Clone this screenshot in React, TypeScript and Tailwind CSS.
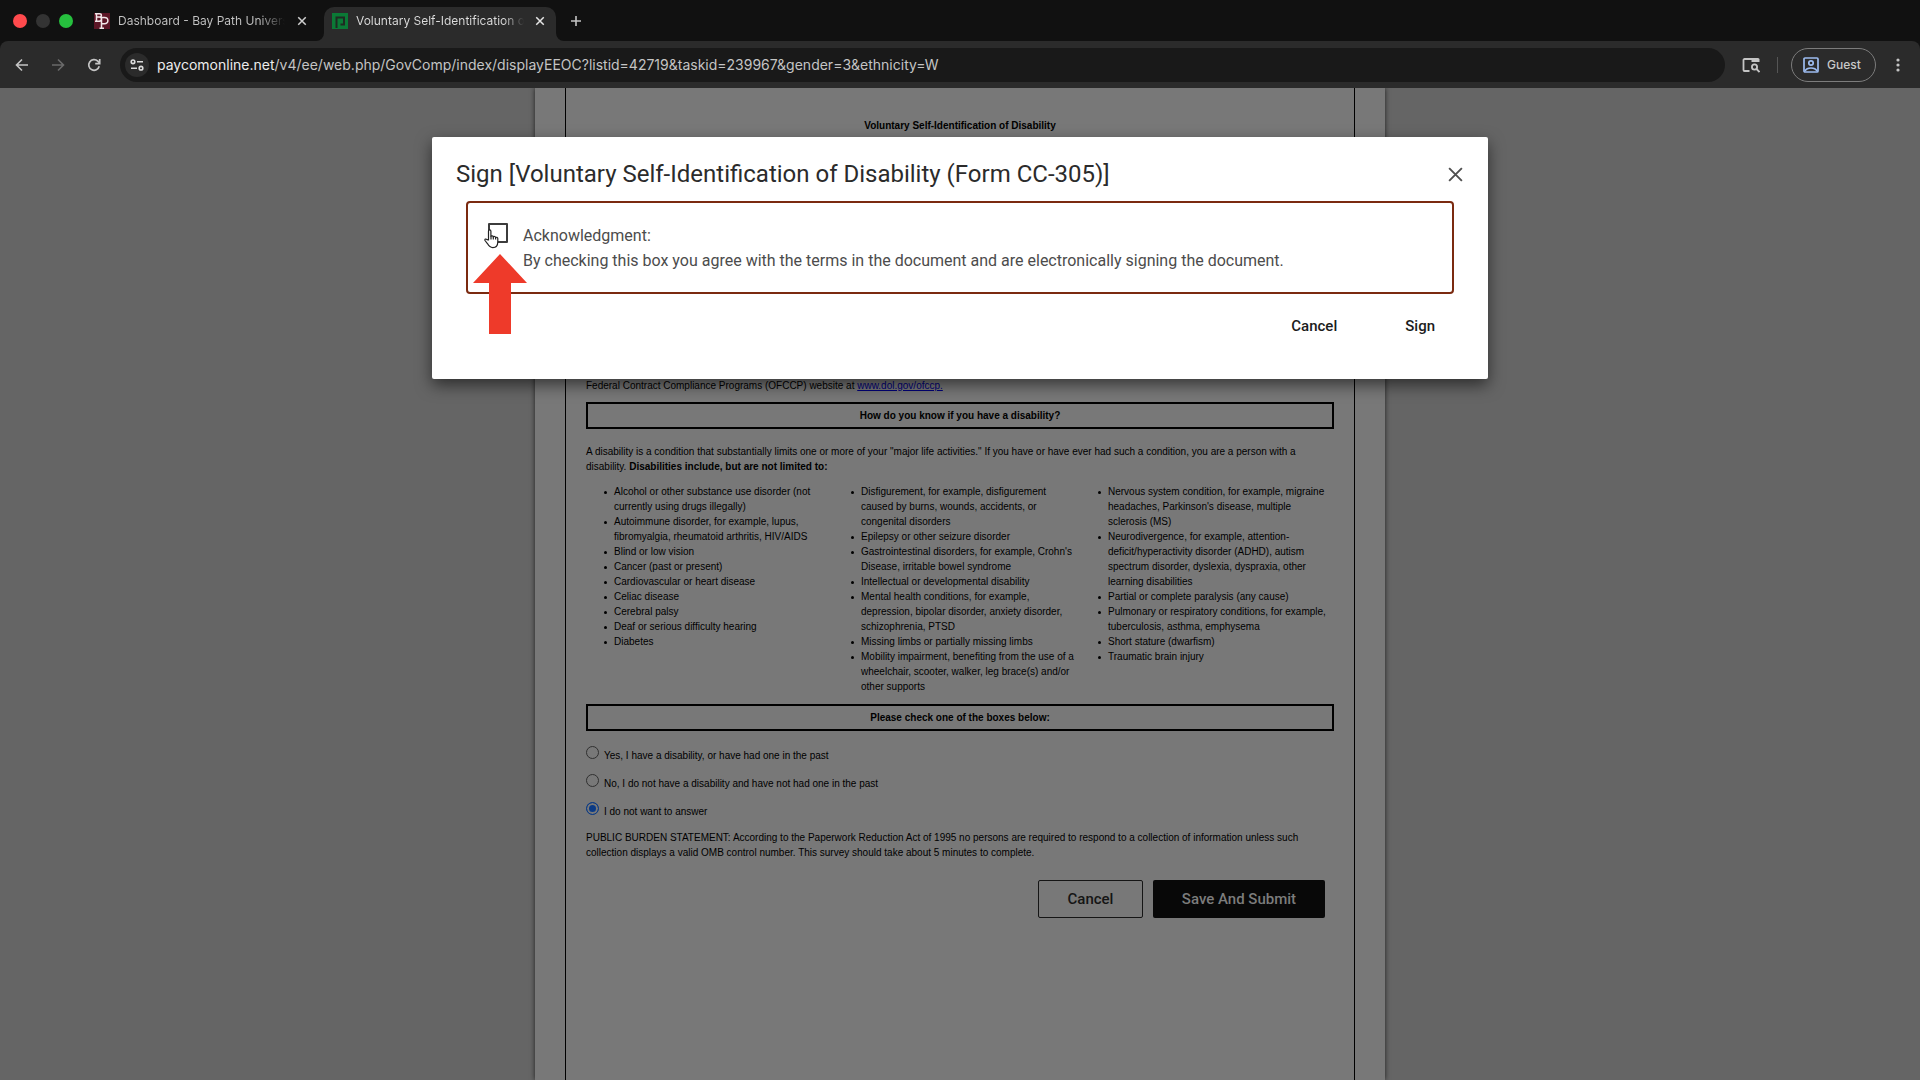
import React from 'react';

const lists: string[][] = [
  [
    'Alcohol or other substance use disorder (not currently using drugs illegally)',
    'Autoimmune disorder, for example, lupus, fibromyalgia, rheumatoid arthritis, HIV/AIDS',
    'Blind or low vision',
    'Cancer (past or present)',
    'Cardiovascular or heart disease',
    'Celiac disease',
    'Cerebral palsy',
    'Deaf or serious difficulty hearing',
    'Diabetes',
  ],
  [
    'Disfigurement, for example, disfigurement caused by burns, wounds, accidents, or congenital disorders',
    'Epilepsy or other seizure disorder',
    "Gastrointestinal disorders, for example, Crohn's Disease, irritable bowel syndrome",
    'Intellectual or developmental disability',
    'Mental health conditions, for example, depression, bipolar disorder, anxiety disorder, schizophrenia, PTSD',
    'Missing limbs or partially missing limbs',
    'Mobility impairment, benefiting from the use of a wheelchair, scooter, walker, leg brace(s) and/or other supports',
  ],
  [
    "Nervous system condition, for example, migraine headaches, Parkinson's disease, multiple sclerosis (MS)",
    'Neurodivergence, for example, attention-deficit/hyperactivity disorder (ADHD), autism spectrum disorder, dyslexia, dyspraxia, other learning disabilities',
    'Partial or complete paralysis (any cause)',
    'Pulmonary or respiratory conditions, for example, tuberculosis, asthma, emphysema',
    'Short stature (dwarfism)',
    'Traumatic brain injury',
  ],
];

const answers = [
  'Yes, I have a disability, or have had one in the past',
  'No, I do not have a disability and have not had one in the past',
  'I do not want to answer',
];

function CloseIcon({ size, width }: { size: number; width: number }) {
  return (
    <svg width={size} height={size} viewBox="0 0 16 16" fill="none" stroke="currentColor" strokeWidth={width}>
      <path d="M2 2l12 12M14 2L2 14" />
    </svg>
  );
}

function TabStrip() {
  return (
    <div className="flex h-[41px] items-end bg-[#111111] pl-[13px]">
      <div className="flex h-[41px] w-[62px] shrink-0 items-center gap-[9px]">
        <span className="size-[14px] shrink-0 rounded-full bg-[#ff4a4d]" />
        <span className="size-[14px] shrink-0 rounded-full bg-[#333333]" />
        <span className="size-[14px] shrink-0 rounded-full bg-[#26c03e]" />
      </div>
      <div className="flex h-[41px] w-[249px] items-center pl-[19px] text-[#c4c4c4]">
        <svg width="16" height="16" viewBox="0 0 16 16" className="shrink-0">
          <rect width="16" height="16" fill="#5c1626" />
          <path
            d="M2.500 0v8.500M1 .8h4.500c2.500 0 2.500 3.200 0 3.200H2.500M5.500 4c3 .4 2.500 4.300-1 4.300H1M7.500 4v11.500M6 4.600h4.500c4.500 0 4.500 6.200 0 6.200H7.500M5.500 15.300h4.500"
            fill="none"
            stroke="#f1e6e8"
            strokeWidth="1.500"
          />
        </svg>
        <span className="ml-2 w-[167px] overflow-hidden bg-linear-to-r from-[#c4c4c4] from-85% to-transparent bg-clip-text text-[12px] leading-[18px] whitespace-nowrap text-transparent">
          Dashboard - Bay Path University
        </span>
        <button aria-label="Close tab" className="ml-[12px] text-[#d0d0d0]">
          <CloseIcon size={10} width={2.4} />
        </button>
      </div>
      <div className="relative flex h-[34px] w-[232px] items-center rounded-t-[10px] bg-[#2b2b2b] pb-[6px] pl-[8px]">
        <svg width="8" height="8" viewBox="0 0 8 8" className="absolute bottom-0 -left-2">
          <path d="M8 0v8H0A8 8 0 0 0 8 0Z" fill="#2b2b2b" />
        </svg>
        <svg width="8" height="8" viewBox="0 0 8 8" className="absolute -right-2 bottom-0">
          <path d="M0 0v8h8A8 8 0 0 1 0 0Z" fill="#2b2b2b" />
        </svg>
        <svg width="16" height="16" viewBox="0 0 16 16" className="shrink-0">
          <rect width="16" height="16" fill="#0b7a36" />
          <path d="M4.500 15V4.500h7.500v7H8.500" fill="none" stroke="#1f2b22" strokeWidth="2" />
        </svg>
        <span className="ml-2 w-[168px] overflow-hidden bg-linear-to-r from-[#dedede] from-88% to-transparent bg-clip-text text-[12px] leading-[18px] whitespace-nowrap text-transparent">
          Voluntary Self-Identification of Disability
        </span>
        <button aria-label="Close tab" className="ml-[11px] text-[#e6e6e6]">
          <CloseIcon size={10} width={2.4} />
        </button>
      </div>
      <button aria-label="New tab" className="ml-[14px] flex h-[41px] items-center text-[#c4c4c4]">
        <svg width="12" height="12" viewBox="0 0 12 12" stroke="currentColor" strokeWidth="1.600">
          <path d="M6 1v10M1 6h10" />
        </svg>
      </button>
    </div>
  );
}

function Toolbar() {
  return (
    <div className="bg-[#111111]">
      <div className="flex h-[47px] items-center rounded-t-lg bg-[#2b2b2b] pl-[15px] text-[#c4c4c4]">
        <button aria-label="Back">
          <svg width="14" height="14" viewBox="0 0 14 14" fill="none" stroke="currentColor" strokeWidth="1.600">
            <path d="M13 7H2M7 1.500L1.500 7 7 12.500" />
          </svg>
        </button>
        <button aria-label="Forward" className="ml-[22px] text-[#6a6a6a]">
          <svg width="14" height="14" viewBox="0 0 14 14" fill="none" stroke="currentColor" strokeWidth="1.600">
            <path d="M1 7h11M7 1.500L12.500 7 7 12.500" />
          </svg>
        </button>
        <button aria-label="Reload" className="ml-[22px]">
          <svg width="14" height="14" viewBox="0 0 14 14" fill="none" stroke="currentColor" strokeWidth="1.700">
            <path d="M12.200 8.200A5.300 5.300 0 1 1 10.800 3.200L12.500 5" />
            <path d="M12.700 1v4.600H8.200" />
          </svg>
        </button>
        <div className="ml-[19px] flex h-[34px] flex-1 items-center rounded-full bg-[#191919] pl-[5px]">
          <button aria-label="Site information" className="flex size-6 items-center justify-center rounded-full bg-[#2b2b2b] text-[#dcdcdc]">
            <svg width="14" height="12" viewBox="0 0 14 12" fill="none" stroke="currentColor" strokeWidth="1.600">
              <circle cx="3" cy="2.800" r="1.800" />
              <path d="M7 2.800h6M1 9.200h6" />
              <circle cx="11" cy="9.200" r="1.800" />
            </svg>
          </button>
          <p className="ml-2 text-[14px] whitespace-nowrap text-[#c4c4c4]">
            <span className="text-[#ececec]">paycomonline.net</span>
            /v4/ee/web.php/GovComp/index/displayEEOC?listid=42719&amp;taskid=239967&amp;gender=3&amp;ethnicity=W
          </p>
        </div>
        <button aria-label="Search tabs" className="ml-[17px]">
          <svg width="18" height="16" viewBox="0 0 18 16" fill="none" stroke="currentColor" strokeWidth="1.800">
            <path d="M7.500 14H2.500a1 1 0 0 1-1-1V3a1 1 0 0 1 1-1H10" />
            <path d="M9.500 1h6.500a1.500 1.500 0 0 1 1.500 1.500V5h-8z" fill="currentColor" stroke="none" />
            <circle cx="12.500" cy="10" r="2.600" />
            <path d="M14.500 12l3 3" />
          </svg>
        </button>
        <span className="ml-[17px] h-4 w-px bg-[#555555]" />
        <button className="ml-[13px] flex h-[34px] w-[85px] items-center gap-2 rounded-full border border-[#7c7c7c] pl-[11px] text-[12px] font-medium text-[#c8c8c8]">
          <svg width="16" height="16" viewBox="0 0 16 16" fill="none" stroke="#9dbcf0" strokeWidth="1.700">
            <rect x="1" y="1" width="14" height="14" rx="1" />
            <circle cx="8" cy="6" r="2.200" />
            <path d="M2 14c2-4 10-4 12 0" />
          </svg>
          Guest
        </button>
        <button aria-label="Menu" className="mr-5 ml-5">
          <svg width="4" height="14" viewBox="0 0 4 14" fill="currentColor">
            <circle cx="2" cy="2" r="1.600" />
            <circle cx="2" cy="7" r="1.600" />
            <circle cx="2" cy="12" r="1.600" />
          </svg>
        </button>
      </div>
    </div>
  );
}

function FormPage() {
  return (
    <div className="mx-auto min-h-full w-full max-w-[850px] bg-[#787878] px-[30px] shadow-[0_0_5px_rgba(0,0,0,0.7)]">
      <div className="flex min-h-[992px] flex-col border-x border-black px-5 text-[10px] leading-[15px] text-black">
        <h1 className="mt-[30px] text-center font-bold">Voluntary Self-Identification of Disability</h1>
        <p className="mt-[247px] leading-[12px]">
          Federal Contract Compliance Programs (OFCCP) website at{' '}
          <a href="#ofccp" className="text-[#000078] underline">www.dol.gov/ofccp.</a>
        </p>
        <h2 className="mt-[10px] flex h-[27px] items-center justify-center border-2 border-black font-bold">
          How do you know if you have a disability?
        </h2>
        <p className="mt-[15px]">
          A disability is a condition that substantially limits one or more of your "major life activities." If you have or have ever had such a condition, you are a person with a disability. <b>Disabilities include, but are not limited to:</b>
        </p>
        <div className="mt-[10px] grid grid-cols-3 pr-[7px]">
          {lists.map((items, i) => (
            <ul key={i} className="pl-[18px]">
              {items.map((t) => (
                <li
                  key={t}
                  className="flex before:mt-[7px] before:mr-[7px] before:size-[3px] before:shrink-0 before:rounded-full before:bg-black before:content-['']"
                >
                  {t}
                </li>
              ))}
            </ul>
          ))}
        </div>
        <h2 className="mt-[10px] flex h-[27px] items-center justify-center border-2 border-black font-bold">
          Please check one of the boxes below:
        </h2>
        <div className="mt-[15px] flex flex-col gap-[11px]">
          {answers.map((a, i) => (
            <label key={a} className="flex h-[17px] gap-[5px]">
              <input
                type="radio"
                name="answer"
                defaultChecked={i === 2}
                className="size-[13px] appearance-none rounded-full border border-[#303030] checked:border-[#0a3a85] checked:bg-[#0a3a85] checked:shadow-[inset_0_0_0_2px_#787878]"
              />
              <span className="self-end leading-[15px]">{a}</span>
            </label>
          ))}
        </div>
        <p className="mt-[11px]">
          PUBLIC BURDEN STATEMENT: According to the Paperwork Reduction Act of 1995 no persons are required to respond to a collection of information unless such collection displays a valid OMB control number. This survey should take about 5 minutes to complete.
        </p>
        <div className="mt-5 flex justify-end gap-[10px] pr-[9px] font-[Roboto] text-[15px] font-medium">
          <button className="h-[38px] w-[105px] rounded-[2px] border border-[#151515] text-[#151515]">Cancel</button>
          <button className="h-[38px] w-[172px] rounded-[2px] bg-[#080808] text-[#7c7c7c]">Save And Submit</button>
        </div>
      </div>
    </div>
  );
}

function SignDialog() {
  return (
    <div
      role="dialog"
      aria-labelledby="sign-title"
      className="absolute inset-x-0 top-[49px] mx-auto w-[55%] rounded-[2px] bg-white px-6 pt-[19px] pb-10 font-[Roboto] shadow-[0_6px_16px_rgba(0,0,0,0.55)]"
    >
      <div className="flex items-center justify-between">
        <h2 id="sign-title" className="text-[24px] leading-[36px] text-[#2b2b2b]">
          Sign [Voluntary Self-Identification of Disability (Form CC-305)]
        </h2>
        <button aria-label="Close" className="text-[#4f4f4f]">
          <CloseIcon size={17} width={1.8} />
        </button>
      </div>
      <div className="relative mx-[10px] mt-[9px] flex h-[93px] rounded-[4px] border-2 border-[#7b2a10] pt-5 pl-5 text-[#4c4c4c]">
        <input id="ack" type="checkbox" className="size-5 appearance-none rounded-[1px] border-2 border-[#3c3c3c]" />
        <label htmlFor="ack" className="ml-[15px] text-[16px] leading-[25px]">
          Acknowledgment:
          <br />
          By checking this box you agree with the terms in the document and are electronically signing the document.
        </label>
        <svg width="54" height="80" viewBox="0 0 54 80" className="absolute top-[51px] left-[5px]" fill="#ee3a2a">
          <path d="M27 0L54 29H38v51H16V29H0Z" />
        </svg>
        <svg
          width="16"
          height="20"
          viewBox="0 0 16 20"
          className="absolute top-[26px] left-[16px]"
          fill="#ffffff"
          stroke="#222222"
          strokeWidth="1.200"
          strokeLinejoin="round"
        >
          <path d="M4.500 11V2.200c0-1.700 2.400-1.700 2.400 0V7.500c.5-1 2.300-.8 2.400.4.600-.8 2.200-.5 2.300.7.700-.7 2.200-.3 2.200 1v3.200c0 3-1.500 5.800-5 5.800-3 0-4-1.500-5.200-3.800L1 11.500c-.6-1.500 1-2 2-.9Z" />
          <path d="M7 7.500v3M9.300 8v2.500M11.600 8.600v2" fill="none" />
        </svg>
      </div>
      <div className="mt-[19px] flex justify-end text-[15px] leading-[26px] font-medium text-[#1c1c1c]">
        <button className="mr-[68px]">Cancel</button>
        <button className="mr-[29px]">Sign</button>
      </div>
    </div>
  );
}

export default function App() {
  return (
    <div className="flex h-screen flex-col overflow-hidden font-['Liberation_Sans',sans-serif]">
      <header className="font-[Inter,sans-serif]">
        <TabStrip />
        <Toolbar />
      </header>
      <main className="relative flex-1 overflow-hidden bg-[#656565]">
        <FormPage />
        <SignDialog />
      </main>
    </div>
  );
}
